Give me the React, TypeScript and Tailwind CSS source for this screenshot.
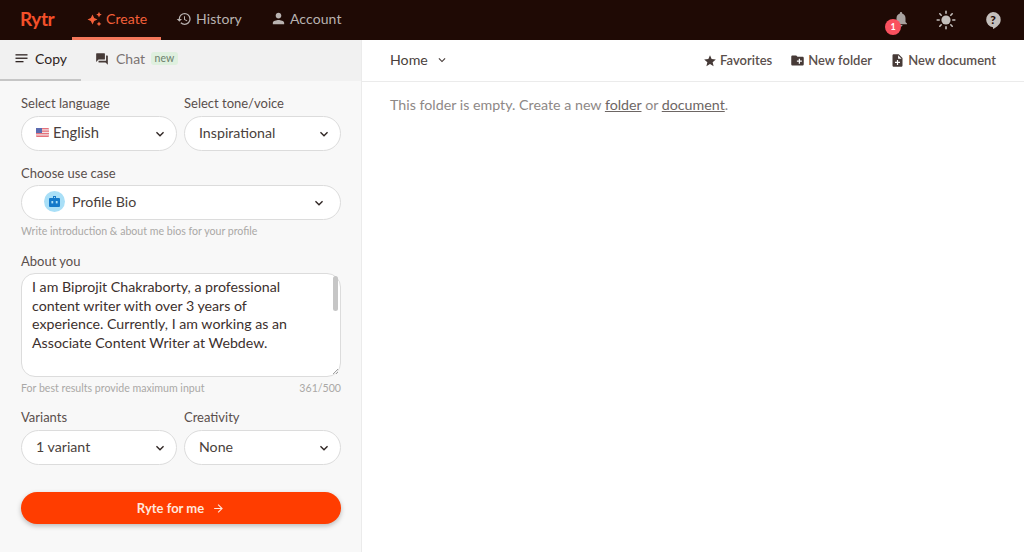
import React from "react";
import { MdHistory, MdPerson, MdForum, MdStar, MdCreateNewFolder, MdNoteAdd, MdNotifications, MdExpandMore, MdArrowForward } from "react-icons/md";

function Sparkle() {
  return (
    <svg width="16" height="16" viewBox="0 0 16 16" fill="currentColor">
      <path d="M5.5 3.5 7.2 7l3.3 1.5-3.3 1.6-1.7 3.4-1.7-3.4L.5 8.5 3.8 7z" />
      <path d="M12 .8l.9 1.9 1.9.9-1.9.9-.9 1.9-.9-1.9-1.9-.9 1.9-.9z" />
      <path d="M12 10.5l.8 1.6 1.6.8-1.6.8-.8 1.6-.8-1.6-1.6-.8 1.6-.8z" />
    </svg>
  );
}

function Flag() {
  return (
    <svg width="13" height="9" viewBox="0 0 13 9" className="shrink-0">
      <rect width="13" height="9" rx="1" fill="#e5727c" />
      <rect y="1.3" width="13" height="1.2" fill="#f3e4e6" />
      <rect y="3.8" width="13" height="1.2" fill="#f3e4e6" />
      <rect y="6.3" width="13" height="1.2" fill="#f3e4e6" />
      <rect width="6" height="5" fill="#5c6bb0" />
    </svg>
  );
}

function Bot() {
  return (
    <span className="flex h-[21px] w-[21px] items-center justify-center rounded-full bg-[#a9dff7]">
      <svg width="13" height="13" viewBox="0 0 13 13" fill="#1479c9">
        <path d="M5 1h3v2h3a1 1 0 0 1 1 1v7a1 1 0 0 1-1 1H2a1 1 0 0 1-1-1V4a1 1 0 0 1 1-1h3zM6 2v1h1V2z" fillRule="evenodd" />
        <rect x="3.4" y="6" width="1.8" height="2.4" fill="#a9dff7" />
        <rect x="7.8" y="6" width="1.8" height="2.4" fill="#a9dff7" />
      </svg>
    </span>
  );
}

function Sun() {
  return (
    <svg width="20" height="20" viewBox="0 0 20 20" fill="#c4bfbc" stroke="#c4bfbc" strokeWidth="1.6" strokeLinecap="round">
      <circle cx="10" cy="10" r="4.6" stroke="none" />
      <path d="M10 1.2v2M10 16.8v2M1.2 10h2M16.8 10h2M3.8 3.8l1.4 1.4M14.8 14.8l1.4 1.4M3.8 16.2l1.4-1.4M14.8 5.2l1.4-1.4" />
    </svg>
  );
}

function Help2() {
  return (
    <svg width="18" height="19" viewBox="0 0 18 19">
      <path d="M9 1a7.7 7.7 0 0 1 7.7 7.7c0 4.2-3.4 7-7.7 9.3v-1.7A7.7 7.7 0 0 1 9 1z" fill="#c4bfbc" />
      <text x="9" y="13.2" textAnchor="middle" fontSize="12" fontWeight="900" fill="#1f0a05" fontFamily="Lato, sans-serif">?</text>
    </svg>
  );
}

function Select({ children, className = "" }: { children: React.ReactNode; className?: string }) {
  return (
    <div className={"flex h-[35px] items-center justify-between rounded-full border border-[#dcdcdc] bg-white text-[14.2px] text-[#4a3f3c] " + className}>
      <span className="flex items-center pb-[2px]">{children}</span>
      <MdExpandMore size={16} className="text-[#2e2422]" />
    </div>
  );
}

function Label({ children, tight }: { children: React.ReactNode; tight?: boolean }) {
  return <div className={(tight ? "mb-[4px]" : "mb-[5px]") + " h-[16px] text-[13px] leading-[16px] text-[#5a4f4c]"}>{children}</div>;
}

function Help({ children }: { children: React.ReactNode }) {
  return <div className="h-[14px] text-[10.6px] leading-[14px] text-[#aaa8a6]">{children}</div>;
}

function NavItem({ icon, label, active, className, gap }: { icon: React.ReactNode; label: string; active?: boolean; className: string; gap: string }) {
  return (
    <div className={"flex h-full items-center border-b-[3px] " + gap + " " + className + " " + (active ? "border-[#f4775a] text-[#f4603a]" : "border-transparent text-[#b9b3b1]")}>
      {icon}
      <span className="text-[14px] tracking-[0.1px]">{label}</span>
    </div>
  );
}

function Action({ icon, label }: { icon: React.ReactNode; label: string }) {
  return (
    <div className="flex items-center gap-[3px] text-[13px] font-semibold text-[#5a4f4c]">
      <span className="text-[#463a37]">{icon}</span>
      {label}
    </div>
  );
}

export default function App() {
  return (
    <div className="flex h-[552px] w-[1024px] flex-col overflow-hidden bg-white font-['Lato','Liberation_Sans',sans-serif]">
      <header className="flex h-[40px] shrink-0 items-center bg-[#1f0a05]">
        <div className="w-[72px] pb-[3px] pl-[20px] text-[19px] font-bold leading-none tracking-[-0.5px] text-[#f4502a]">Rytr</div>
        <NavItem active icon={<Sparkle />} label="Create" className="w-[89px] pl-[15px]" gap="gap-[3px]" />
        <NavItem icon={<MdHistory size={16} />} label="History" className="pl-[15px] pr-[14px]" gap="gap-[4px]" />
        <NavItem icon={<MdPerson size={17} />} label="Account" className="pl-[14px]" gap="gap-[3px]" />
        <div className="ml-auto flex items-center pr-[22px]">
          <div className="relative mb-[2px] mr-[26px]">
            <MdNotifications size={18} className="text-[#a8a2a0]" />
            <span className="absolute left-[-7px] top-[9px] flex h-[16px] w-[16px] items-center justify-center rounded-full bg-[#f9505e] text-[9px] font-bold text-white">1</span>
          </div>
          <span className="mr-[28px]"><Sun /></span>
          <Help2 />
        </div>
      </header>
      <div className="flex min-h-0 flex-1">
        <aside className="flex w-[362px] shrink-0 flex-col border-r border-[#ebebeb] bg-[#f8f8f8]">
          <div className="flex h-[41px] shrink-0 items-center bg-[#f1f1f1]">
            <div className="flex h-full w-[81px] items-center gap-[7px] border-b-[2px] border-[#c6c6c6] pb-[3px] pl-[15px] text-[14px] text-[#2e2422]">
              <svg width="13" height="13" viewBox="0 0 13 13" fill="#2e2422"><rect x="0.5" y="2.2" width="12" height="1.3" /><rect x="0.5" y="5.6" width="12" height="1.3" /><rect x="0.5" y="9" width="8" height="1.3" /></svg>
              Copy
            </div>
            <div className="ml-[14px] flex items-center gap-[6px] pb-[4px] text-[14px] text-[#7b7371]">
              <span className="flex items-center gap-[7px]"><MdForum size={14} className="text-[#463a37]" />Chat</span>
              <span className="rounded-[3px] bg-[#dff0df] px-[3.5px] text-[10.5px] leading-[13px] text-[#6d7f6d]">new</span>
            </div>
          </div>
          <div className="flex flex-1 flex-col pl-[21px] pr-[20px] pt-[14px]">
            <div className="grid grid-cols-[156px_1fr] gap-x-[7px]">
              <div>
                <Label>Select language</Label>
                <Select className="pl-[14px] pr-[8px]"><Flag /><span className="ml-[4px] text-[14.8px]">English</span></Select>
              </div>
              <div>
                <Label>Select tone/voice</Label>
                <Select className="pl-[14px] pr-[8px]">Inspirational</Select>
              </div>
            </div>
            <div className="mt-[14px]">
              <Label tight>Choose use case</Label>
              <Select className="pl-[22px] pr-[13px]"><Bot /><span className="ml-[7px]">Profile Bio</span></Select>
            </div>
            <div className="mt-[4px]"><Help>Write introduction &amp; about me bios for your profile</Help></div>
            <div className="mt-[15px]">
              <Label tight>About you</Label>
              <div className="relative h-[104px] rounded-[14px] border border-[#dcdcdc] bg-white pl-[10px] pr-[12px] pt-[4px] text-[14.2px] leading-[18.7px] text-[#3c302d]">
                I am Biprojit Chakraborty, a professional<br />
                content writer with over 3 years of<br />
                experience. Currently, I am working as an<br />
                Associate Content Writer at Webdew.
                <span className="absolute right-[2px] top-[2px] h-[35px] w-[5px] rounded-full bg-[#c6c6c6]" />
                <svg className="absolute bottom-[1px] right-[1px]" width="8" height="8" viewBox="0 0 8 8" stroke="#8a8a8a" strokeWidth="0.8"><path d="M7 2 2 7M7 5 5 7" /></svg>
              </div>
            </div>
            <div className="mt-[4px] flex items-center justify-between"><Help>For best results provide maximum input</Help><Help>361/500</Help></div>
            <div className="mt-[14px] grid grid-cols-[156px_1fr] gap-x-[7px]">
              <div>
                <Label>Variants</Label>
                <Select className="pl-[14px] pr-[8px]">1 variant</Select>
              </div>
              <div>
                <Label>Creativity</Label>
                <Select className="pl-[14px] pr-[8px]">None</Select>
              </div>
            </div>
            <button className="mt-[27px] flex h-[32px] items-center justify-center gap-[8px] rounded-full bg-[#ff3d00] pt-[1px] text-[13px] font-bold text-[#ffe6dc] shadow-[0_2px_5px_rgba(0,0,0,0.25)]">
              Ryte for me <MdArrowForward size={13} />
            </button>
          </div>
        </aside>
        <main className="flex min-w-0 flex-1 flex-col">
          <div className="flex h-[42px] shrink-0 items-center justify-between border-b border-[#ebebeb] px-[28px]">
            <div className="flex items-center gap-[7px] pb-[2px] text-[14.2px] text-[#4a3f3c]">Home <MdExpandMore size={14} className="mt-[1px]" /></div>
            <div className="flex items-center gap-[18px]">
              <Action icon={<MdStar size={14} />} label="Favorites" />
              <Action icon={<MdCreateNewFolder size={15} />} label="New folder" />
              <Action icon={<MdNoteAdd size={15} />} label="New document" />
            </div>
          </div>
          <p className="pl-[28px] pt-[14px] text-[14.25px] leading-[17px] text-[#8e8886]">
            This folder is empty. Create a new <span className="text-[#6d6664] underline">folder</span> or <span className="text-[#6d6664] underline">document</span>.
          </p>
        </main>
      </div>
    </div>
  );
}
